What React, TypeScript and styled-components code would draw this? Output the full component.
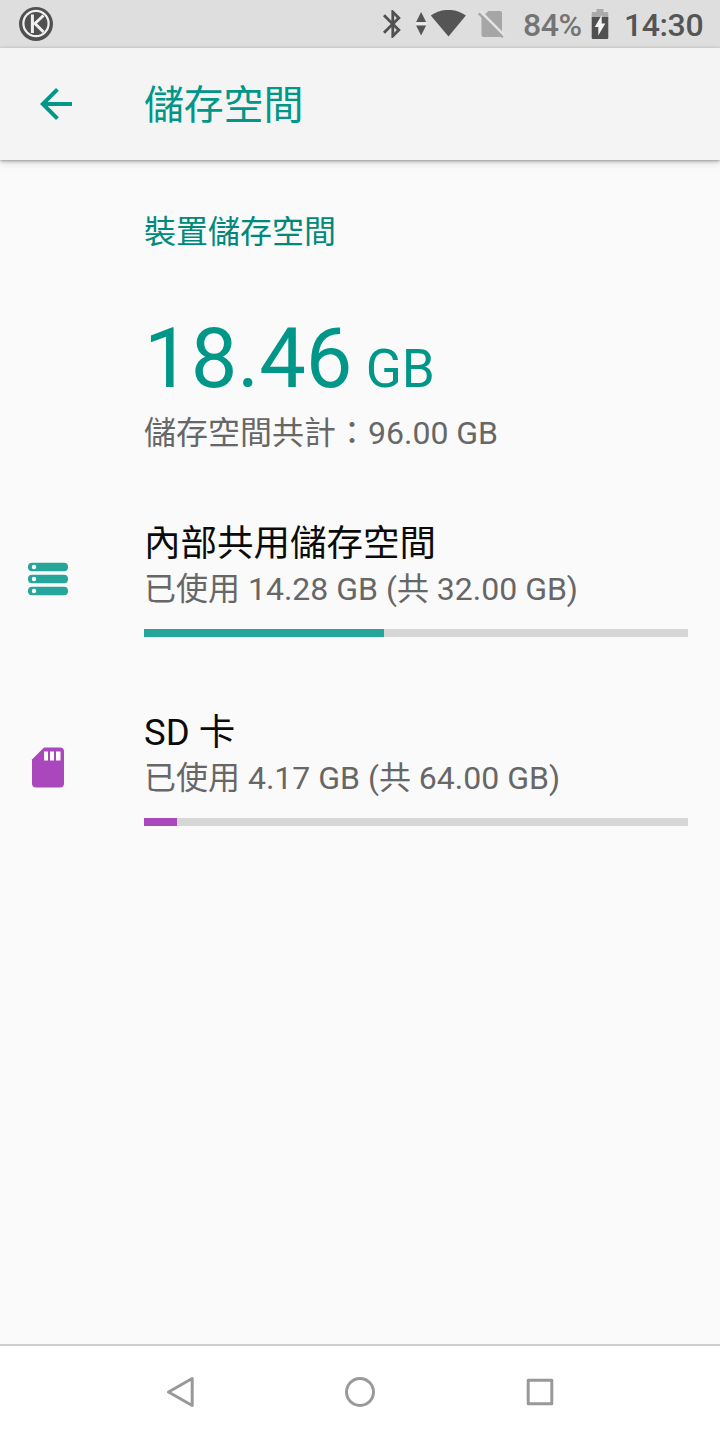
import React from 'react';
import styled, { createGlobalStyle } from 'styled-components';

const teal = '#009688';

const GlobalStyle = createGlobalStyle`
  * { box-sizing: border-box; }
  body {
    margin: 0;
    background: #fafafa;
    font-family: Roboto, 'Noto Sans CJK TC', sans-serif;
  }
`;

const Screen = styled.div`
  display: flex;
  flex-direction: column;
  width: 720px;
  height: 1440px;
  overflow: hidden;
  background: #fafafa;
`;

const StatusBar = styled.header`
  display: flex;
  align-items: center;
  justify-content: space-between;
  flex: none;
  height: 48px;
  padding: 0 16px 0 18px;
  background: #dedede;
`;

const StatusIcons = styled.div`
  display: flex;
  align-items: center;
  height: 48px;
`;

const StatusText = styled.span<{ $color: string; $width: number }>`
  width: ${p => p.$width}px;
  font-size: 32px;
  font-weight: 500;
  letter-spacing: -0.4px;
  line-height: 50px;
  height: 48px;
  white-space: nowrap;
  color: ${p => p.$color};
`;

const Glyph = styled.svg<{ $gap?: number }>`
  display: block;
  flex: none;
  margin-right: ${p => p.$gap ?? 0}px;
`;

const AppBar = styled.div`
  display: flex;
  align-items: center;
  flex: none;
  height: 112px;
  padding-left: 32px;
  background: #f4f4f4;
  box-shadow: 0 1px 3px rgba(0, 0, 0, 0.36), 0 3px 8px rgba(0, 0, 0, 0.12);
  z-index: 1;
`;

const BackButton = styled.button`
  width: 48px;
  height: 48px;
  margin-right: 64px;
  padding: 0;
  border: 0;
  background: none;
`;

const PageTitle = styled.h1`
  margin: 0;
  padding-top: 4px;
  font-size: 40px;
  font-weight: 400;
  line-height: 48px;
  letter-spacing: -0.2px;
  color: ${teal};
`;

const Content = styled.main`
  flex: 1;
  padding-top: 56px;
`;

const Summary = styled.section`
  padding-left: 144px;
`;

const SectionTitle = styled.h2`
  margin: 0 0 69px;
  font-size: 32px;
  font-weight: 400;
  line-height: 32px;
  color: #00897b;
`;

const Total = styled.div`
  margin-bottom: 16px;
  font-size: 83px;
  line-height: 84px;
  color: ${teal};
  white-space: pre;
`;

const Unit = styled.span`
  font-size: 53px;
  line-height: 1;
`;

const Detail = styled.div`
  font-size: 32px;
  line-height: 32px;
  color: #676767;
  white-space: nowrap;
`;

const Volume = styled.section`
  display: flex;
  height: 112px;
  margin-top: 77px;
  padding: 0 32px 0 24px;
`;

const VolumeIcon = styled.div`
  width: 48px;
  margin: 29px 72px 0 0;
`;

const VolumeBody = styled.div`
  flex: 1;
`;

const VolumeName = styled.h3`
  margin: 0 0 11px;
  font-size: 36.5px;
  font-weight: 400;
  line-height: 36px;
  color: #0b0b0b;
`;

const Track = styled.div`
  height: 8px;
  margin-top: 24px;
  background: #d6d6d6;
`;

const Fill = styled.div<{ $width: number; $color: string }>`
  width: ${p => p.$width}px;
  height: 8px;
  background: ${p => p.$color};
`;

const NavBar = styled.nav`
  display: flex;
  align-items: center;
  justify-content: center;
  gap: 132px;
  flex: none;
  height: 96px;
  padding-bottom: 2px;
  border-top: 2px solid #cecece;
  background: #fff;
`;

const LogoIcon = () => (
  <Glyph width="36" height="36" viewBox="0 0 36 36" fill="none">
    <circle cx="18" cy="18" r="17" fill="#505050" />
    <circle cx="18" cy="17.5" r="12.6" stroke="#f0f0f0" strokeWidth="2.2" />
    <path d="M14.4 8.5v18.500M25.500 9.500l-8.500 8 8.500 8.500" stroke="#f0f0f0" strokeWidth="3" />
  </Glyph>
);

const BluetoothIcon = () => (
  <Glyph $gap={14} width="18" height="28" viewBox="5 2 12.86 20">
    <path
      fill="#505050"
      d="M17.71 7.71 12 2h-1v7.59L6.41 5 5 6.41 10.59 12 5 17.59 6.41 19 11 14.41V22h1l5.71-5.71-4.3-4.29 4.3-4.29zM13 5.83l1.88 1.88L13 9.59V5.83zm1.88 10.46L13 18.17v-3.76l1.88 1.88z"
    />
  </Glyph>
);

const WifiIcon = () => (
  <Glyph $gap={11} width="52" height="28" viewBox="-0.6 0 52 28">
    <path d="M5.5 2l5 10h-10zM.5 15.5h10l-5 10z" fill="#555" />
    <path d="M0 12.8h11v1.8H0z" fill="#eee" />
    <path d="M15.2 5.6C25-2 40.5-2 50.3 5.6L32.9 26.6z" fill="#555" />
  </Glyph>
);

const NoSimIcon = () => (
  <Glyph $gap={18} width="27" height="28" viewBox="0 0 27 28">
    <path d="M10.5 1H22q2 0 2 2v22q0 2-2 2H5.5q-2 0-2-2V7.500z" fill="#a6a6a6" />
    <path d="M2.5 1.5l24 24" stroke="#e4e4e4" strokeWidth="2.5" />
    <path d="M.8 3.3l24 24" stroke="#a6a6a6" strokeWidth="2.4" />
  </Glyph>
);

const BatteryIcon = () => (
  <Glyph $gap={15} width="18" height="30" viewBox="0 0 18 30">
    <path d="M5.5 0h7v3H16q1.3 0 1.3 1.3V9H.7V4.300Q.7 3 2 3h3.500z" fill="#aaa" />
    <path d="M.7 8h16.600v20.700q0 1.300-1.300 1.300H2q-1.300 0-1.300-1.300z" fill="#505050" />
    <path d="M10.700 6v8.400h3.600L7.300 26.500v-8.600H3.800z" fill="#f4f4f4" />
  </Glyph>
);

const ArrowIcon = () => (
  <svg width="48" height="48" viewBox="0 0 24 24">
    <path fill={teal} d="M20 11H7.83l5.59-5.59L12 4l-8 8 8 8 1.41-1.41L7.83 13H20v-2z" />
  </svg>
);

const StorageIcon = () => (
  <svg width="48" height="48" viewBox="0 0 48 48">
    {[7.8, 19.8, 31.8].map(y => (
      <g key={y}>
        <rect x="4" y={y} width="40" height="8.4" rx="4" fill="#26a69a" />
        <circle cx="10" cy={y + 4.2} r="2.2" fill="#fff" />
      </g>
    ))}
  </svg>
);

const SdIcon = () => (
  <svg width="48" height="48" viewBox="0 0 48 48">
    <path d="M20 3.500h16q4 0 4 4v32q0 4-4 4H12q-4 0-4-4v-24z" fill="#ab47bc" />
    <path d="M20 7.500h4v9h-4zM26 7.500h4v9h-4zM32 7.500h4.500v9H32z" fill="#fff" />
  </svg>
);

type VolumeRowProps = {
  icon: React.ReactNode;
  name: string;
  detail: string;
  fill: number;
  color: string;
};

const VolumeRow = ({ icon, name, detail, fill, color }: VolumeRowProps) => (
  <Volume>
    <VolumeIcon>{icon}</VolumeIcon>
    <VolumeBody>
      <VolumeName>{name}</VolumeName>
      <Detail>{detail}</Detail>
      <Track>
        <Fill $width={fill} $color={color} />
      </Track>
    </VolumeBody>
  </Volume>
);

export default function App() {
  return (
    <Screen lang="zh-TW">
      <GlobalStyle />
      <StatusBar>
        <LogoIcon />
        <StatusIcons>
          <BluetoothIcon />
          <WifiIcon />
          <NoSimIcon />
          <StatusText $color="#747474" $width={68}>84%</StatusText>
          <BatteryIcon />
          <StatusText $color="#555" $width={80}>14:30</StatusText>
        </StatusIcons>
      </StatusBar>
      <AppBar>
        <BackButton aria-label="返回"><ArrowIcon /></BackButton>
        <PageTitle>儲存空間</PageTitle>
      </AppBar>
      <Content>
        <Summary>
          <SectionTitle>裝置儲存空間</SectionTitle>
          <Total>18.46<Unit> GB</Unit></Total>
          <Detail>儲存空間共計：96.00 GB</Detail>
        </Summary>
        <VolumeRow icon={<StorageIcon />} name="內部共用儲存空間" detail="已使用 14.28 GB (共 32.00 GB)" fill={240} color="#26a69a" />
        <VolumeRow icon={<SdIcon />} name="SD 卡" detail="已使用 4.17 GB (共 64.00 GB)" fill={33} color="#ab47bc" />
      </Content>
      <NavBar>
        <Glyph width="48" height="48" viewBox="0 0 48 48" fill="none" stroke="#999" strokeWidth="3" strokeLinejoin="round">
          <path d="M36.2 10.5v27L12.500 24z" />
        </Glyph>
        <Glyph width="48" height="48" viewBox="0 0 48 48" fill="none" stroke="#999" strokeWidth="3">
          <circle cx="24" cy="24" r="13.5" />
        </Glyph>
        <Glyph width="48" height="48" viewBox="0 0 48 48" fill="none" stroke="#999" strokeWidth="3" strokeLinejoin="round">
          <path d="M12.2 12.2h23.6v23.6H12.200z" />
        </Glyph>
      </NavBar>
    </Screen>
  );
}
